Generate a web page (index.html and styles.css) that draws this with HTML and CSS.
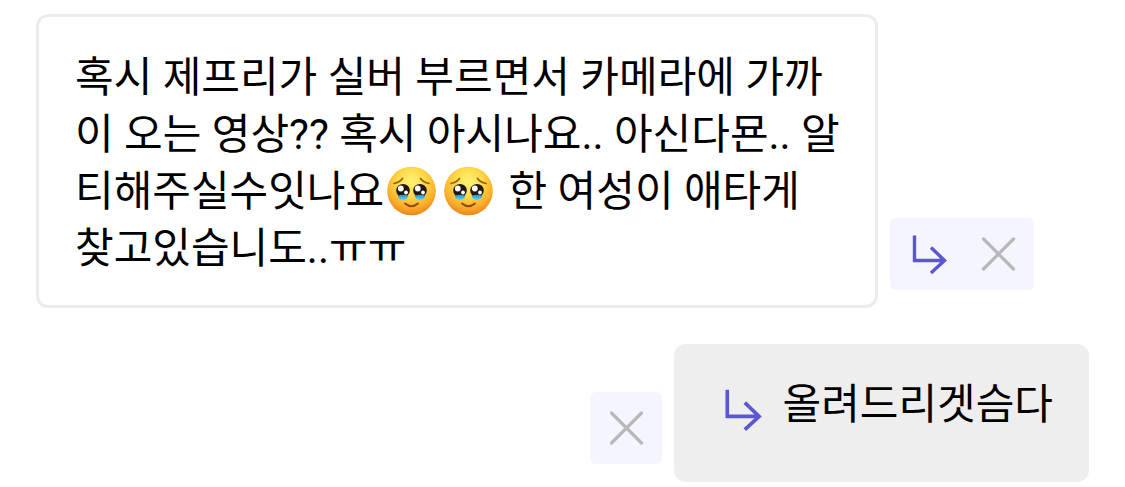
FILE: index.html
```html
<!DOCTYPE html>
<html lang="ko">
<head>
<meta charset="utf-8">
<meta name="viewport" content="width=device-width, initial-scale=1">
<title>질문과 답변</title>
<link rel="stylesheet" href="styles.css">
</head>
<body>
<svg class="defs" aria-hidden="true">
  <defs>
    <radialGradient id="face" cx="50%" cy="32%" r="68%">
      <stop offset="0" stop-color="#fff27a"/>
      <stop offset=".4" stop-color="#ffdc4a"/>
      <stop offset=".75" stop-color="#fcb02c"/>
      <stop offset="1" stop-color="#e8861c"/>
    </radialGradient>
    <linearGradient id="tear" x1="0" y1="0" x2="0" y2="1">
      <stop offset="0" stop-color="#238fc4"/>
      <stop offset="1" stop-color="#66d6fa"/>
    </linearGradient>
    <symbol id="pleading" viewBox="0 2 57 57">
      <circle cx="27.500" cy="30" r="24.300" fill="url(#face)"/>
      <g fill="none" stroke="#985a12" stroke-width="1.700" stroke-linecap="round">
        <path d="M10 22.500Q15.500 21.500 18.500 17.500"/>
        <path d="M45 22.500Q39.500 21.500 36.500 17.500"/>
      </g>
      <ellipse cx="19" cy="29.500" rx="6.800" ry="6.600" fill="#201713"/>
      <ellipse cx="36" cy="29.500" rx="6.800" ry="6.600" fill="#201713"/>
      <path d="M13.500 34.500Q19 33 24.500 34.500Q23 39 19 39Q15 39 13.500 34.500ZM30.500 34.500Q36 33 41.500 34.500Q40 39 36 39Q32 39 30.500 34.500Z" fill="url(#tear)"/>
      <g fill="#fff">
        <circle cx="16.800" cy="27.500" r="2.900"/>
        <circle cx="22" cy="31.500" r="1.900"/>
        <circle cx="33.800" cy="27.500" r="2.900"/>
        <circle cx="39" cy="31.500" r="1.900"/>
      </g>
      <path d="M21 42.500Q27.500 48 34 42.500" fill="none" stroke="#8d4b11" stroke-width="1.900" stroke-linecap="round"/>
    </symbol>
    <symbol id="reply" viewBox="0 0 48 48">
      <path d="M12.500 5.500V30.500H43M29 17.500L42.500 30.500L29 43" fill="none" stroke="#5b57d1" stroke-width="3.400"/>
    </symbol>
    <symbol id="close" viewBox="0 0 48 48">
      <path d="M9.500 9L39.500 39M39.500 9L9.500 39" fill="none" stroke="#b8b8bb" stroke-width="3.200" stroke-linecap="round"/>
    </symbol>
  </defs>
</svg>
<main class="thread">
  <article class="row question">
    <p class="bubble outlined">혹시 제프리가 실버 부르면서 카메라에 가까<br>이 오는 영상?? 혹시 아시나요.. 아신다묜.. 알<br>티해주실수잇나요<svg class="emoji" role="img" aria-label="🥹"><use href="#pleading"/></svg><svg class="emoji" role="img" aria-label="🥹"><use href="#pleading"/></svg> 한 여성이 애타게<br>찾고있습니도..ㅠㅠ</p>
    <div class="actions">
      <button class="action" type="button" aria-label="답글"><svg class="icon"><use href="#reply"/></svg></button>
      <button class="action" type="button" aria-label="삭제"><svg class="icon"><use href="#close"/></svg></button>
    </div>
  </article>
  <article class="row answer">
    <div class="actions">
      <button class="action" type="button" aria-label="삭제"><svg class="icon"><use href="#close"/></svg></button>
    </div>
    <div class="bubble filled">
      <svg class="mark" aria-hidden="true"><use href="#reply"/></svg>
      <p class="text">올려드리겟슴다</p>
    </div>
  </article>
</main>
</body>
</html>
```
FILE: styles.css
```css
* {
  box-sizing: border-box;
}

body {
  margin: 0;
  background: #fff;
  color: #000;
  font-family: Roboto, "Noto Sans CJK KR", sans-serif;
  font-size: 42px;
  line-height: 57px;
}

p {
  margin: 0;
}

.defs {
  position: absolute;
  width: 0;
  height: 0;
}

.thread {
  display: flex;
  flex-direction: column;
  gap: 36px;
  padding: 14px 36px 5px;
}

.row {
  display: flex;
  align-items: flex-end;
  gap: 12px;
}

.answer {
  justify-content: flex-end;
}

.bubble {
  border-radius: 12px;
}

.outlined {
  width: 80%;
  padding: 32px 32px 28px 36px;
  border: 3px solid #ececec;
}

.filled {
  display: flex;
  align-items: flex-start;
  gap: 18px;
  padding: 32px 36px 28px 40px;
  background: #eee;
}

.actions {
  display: flex;
  flex: none;
  margin-bottom: 18px;
  border-radius: 6px;
  background: #f5f5ff;
}

.action {
  display: grid;
  place-items: center;
  width: 72px;
  height: 72px;
  padding: 0;
  border: 0;
  background: none;
  cursor: pointer;
}

.icon {
  display: block;
  width: 48px;
  height: 48px;
}

.mark {
  flex: none;
  width: 51px;
  height: 51px;
  margin: 8px 0 19px;
}

.emoji {
  width: 57px;
  height: 57px;
  vertical-align: top;
}
```
